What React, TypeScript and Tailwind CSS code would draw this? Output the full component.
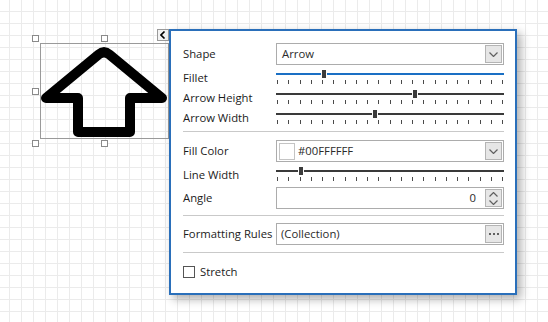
import React from "react";

const FONT = "font-['Open_Sans',sans-serif]";

function Chevron({ dir = "down" }: { dir?: "down" | "up" }) {
  return (
    <svg width="9" height="5" viewBox="0 0 9 5" className="block">
      {dir === "down" ? (
        <path d="M0.5 0.5 L4.5 4.5 L8.5 0.5" fill="none" stroke="#606060" strokeWidth="1.2" />
      ) : (
        <path d="M0.5 4.5 L4.5 0.5 L8.5 4.5" fill="none" stroke="#606060" strokeWidth="1.2" />
      )}
    </svg>
  );
}

function Slider({ thumb, blue = false }: { thumb: number; blue?: boolean }) {
  const ticks = Array.from({ length: 21 }, (_, i) => i);
  return (
    <div className="relative w-[228px] h-[20px]">
      <div
        className={
          "absolute left-0 top-[5px] h-[2px] w-[228px] " +
          (blue ? "bg-[#1a6fc4]" : "bg-[#3a3a3a]")
        }
      />
      <div
        className="absolute top-[2px] h-[8px] w-[6px] border-x border-white bg-[#3c3c3c]"
        style={{ left: thumb - 1 }}
      />
      <div className="absolute left-[1px] top-[12px] w-[226px] h-[4px] flex justify-between">
        {ticks.map((t) => (
          <div key={t} className="w-[1px] h-[4px] bg-[#4a4a4a]" />
        ))}
      </div>
    </div>
  );
}

function Label({ children }: { children: React.ReactNode }) {
  return (
    <div className="w-[93px] shrink-0 text-[11.3px] leading-[14px] text-[#1b1b1b] whitespace-nowrap">
      {children}
    </div>
  );
}

function SideButton({ children }: { children: React.ReactNode }) {
  return (
    <div className="w-[17px] h-[18px] border border-[#b4b4b4] bg-[#e6e6e6] flex flex-col items-center justify-center gap-[3px]">
      {children}
    </div>
  );
}

export default function App() {
  return (
    <div
      className={
        "relative w-[548px] h-[322px] overflow-hidden bg-white " +
        FONT +
        " bg-[linear-gradient(to_right,#ebebeb_1px,transparent_1px),linear-gradient(to_bottom,#ebebeb_1px,transparent_1px)] bg-size-[12px_12px] bg-position-[9px_11px]"
      }
    >
      {/* Shape on canvas */}
      <svg width="180" height="150" className="absolute left-0 top-0">
        <rect x="40.5" y="43.5" width="128" height="95" fill="none" stroke="#9a9a9a" strokeWidth="1" />
        <path
          d="M98.6 54.5 Q104 50 109.4 54.5 L162 98 L130 98 L130 132 L78 132 L78 98 L46 98 Z"
          fill="none"
          stroke="#000"
          strokeWidth="10"
          strokeLinejoin="round"
        />
      </svg>
      {/* Selection handles */}
      <div className="absolute left-[32px] top-[35px] w-[7px] h-[7px] border border-[#8a8a8a] bg-white" />
      <div className="absolute left-[101px] top-[35px] w-[7px] h-[7px] border border-[#8a8a8a] bg-white" />
      <div className="absolute left-[32px] top-[88px] w-[7px] h-[7px] border border-[#8a8a8a] bg-white" />
      <div className="absolute left-[32px] top-[140px] w-[7px] h-[7px] border border-[#8a8a8a] bg-white" />
      <div className="absolute left-[101px] top-[140px] w-[7px] h-[7px] border border-[#8a8a8a] bg-white" />

      {/* Collapse button */}
      <div className="absolute left-[157px] top-[29px] w-[12px] h-[12px] border border-[#9a9a9a] bg-[#f3f3f3] flex items-center justify-center">
        <svg width="6" height="8" viewBox="0 0 6 8">
          <path d="M4.5 0.5 L1 4 L4.5 7.5" fill="none" stroke="#000" strokeWidth="1.6" />
        </svg>
      </div>

      {/* Properties panel */}
      <div className="absolute left-[169px] top-[29px] w-[348px] h-[266px] border-2 border-[#2a6fba] bg-white shadow-[4px_4px_9px_rgba(0,0,0,0.32)] flex flex-col pl-[12px] pr-[11px] pt-[12px]">
        {/* Shape */}
        <div className="flex items-center h-[22px]">
          <Label>Shape</Label>
          <div className="w-[228px] h-[22px] border border-[#acacac] flex items-center justify-between pl-[5px] pr-[1px]">
            <span className="text-[11.3px] leading-[14px] text-[#2b2b2b]">Arrow</span>
            <SideButton>
              <Chevron />
            </SideButton>
          </div>
        </div>
        {/* Sliders */}
        <div className="flex items-center h-[20px] mt-[3px]">
          <Label>Fillet</Label>
          <Slider thumb={46} blue />
        </div>
        <div className="flex items-center h-[20px]">
          <Label>Arrow Height</Label>
          <Slider thumb={137} />
        </div>
        <div className="flex items-center h-[20px]">
          <Label>Arrow Width</Label>
          <Slider thumb={97} />
        </div>
        <div className="h-[1px] bg-[#c9c9c9] mt-[3px] w-[321px]" />

        {/* Fill Color */}
        <div className="flex items-center h-[22px] mt-[8px]">
          <Label>Fill Color</Label>
          <div className="w-[228px] h-[22px] border border-[#acacac] flex items-center justify-between pl-[2px] pr-[1px]">
            <div className="flex items-center gap-[3px]">
              <div className="w-[16px] h-[17px] border border-[#c4c4c4] bg-white" />
              <span className="text-[11.3px] leading-[14px] text-[#2b2b2b]">#00FFFFFF</span>
            </div>
            <SideButton>
              <Chevron />
            </SideButton>
          </div>
        </div>
        {/* Line Width */}
        <div className="flex items-center h-[20px] mt-[3px]">
          <Label>Line Width</Label>
          <Slider thumb={23} />
        </div>
        {/* Angle */}
        <div className="flex items-center h-[22px] mt-[2px]">
          <Label>Angle</Label>
          <div className="w-[228px] h-[22px] border border-[#acacac] flex items-center justify-end pr-[1px] gap-[9px]">
            <span className="text-[11.3px] leading-[14px] text-[#2b2b2b]">0</span>
            <SideButton>
              <Chevron dir="up" />
              <Chevron />
            </SideButton>
          </div>
        </div>
        <div className="h-[1px] bg-[#c9c9c9] mt-[6px] w-[321px]" />

        {/* Formatting Rules */}
        <div className="flex items-center h-[22px] mt-[7px]">
          <Label>Formatting Rules</Label>
          <div className="w-[228px] h-[22px] border border-[#acacac] flex items-center justify-between pl-[4px] pr-[1px]">
            <span className="text-[11.3px] leading-[14px] text-[#2b2b2b]">(Collection)</span>
            <div className="w-[17px] h-[18px] border border-[#b4b4b4] bg-[#e6e6e6] flex items-center justify-center gap-[2px]">
              <div className="w-[2px] h-[2px] bg-[#606060]" />
              <div className="w-[2px] h-[2px] bg-[#606060]" />
              <div className="w-[2px] h-[2px] bg-[#606060]" />
            </div>
          </div>
        </div>
        <div className="h-[1px] bg-[#c9c9c9] mt-[7px] w-[321px]" />

        {/* Stretch */}
        <div className="flex items-center h-[24px] mt-[7px] gap-[5px]">
          <div className="w-[12px] h-[12px] border border-[#555] bg-white" />
          <span className="text-[11.3px] leading-[14px] text-[#1b1b1b]">Stretch</span>
        </div>
      </div>
    </div>
  );
}
